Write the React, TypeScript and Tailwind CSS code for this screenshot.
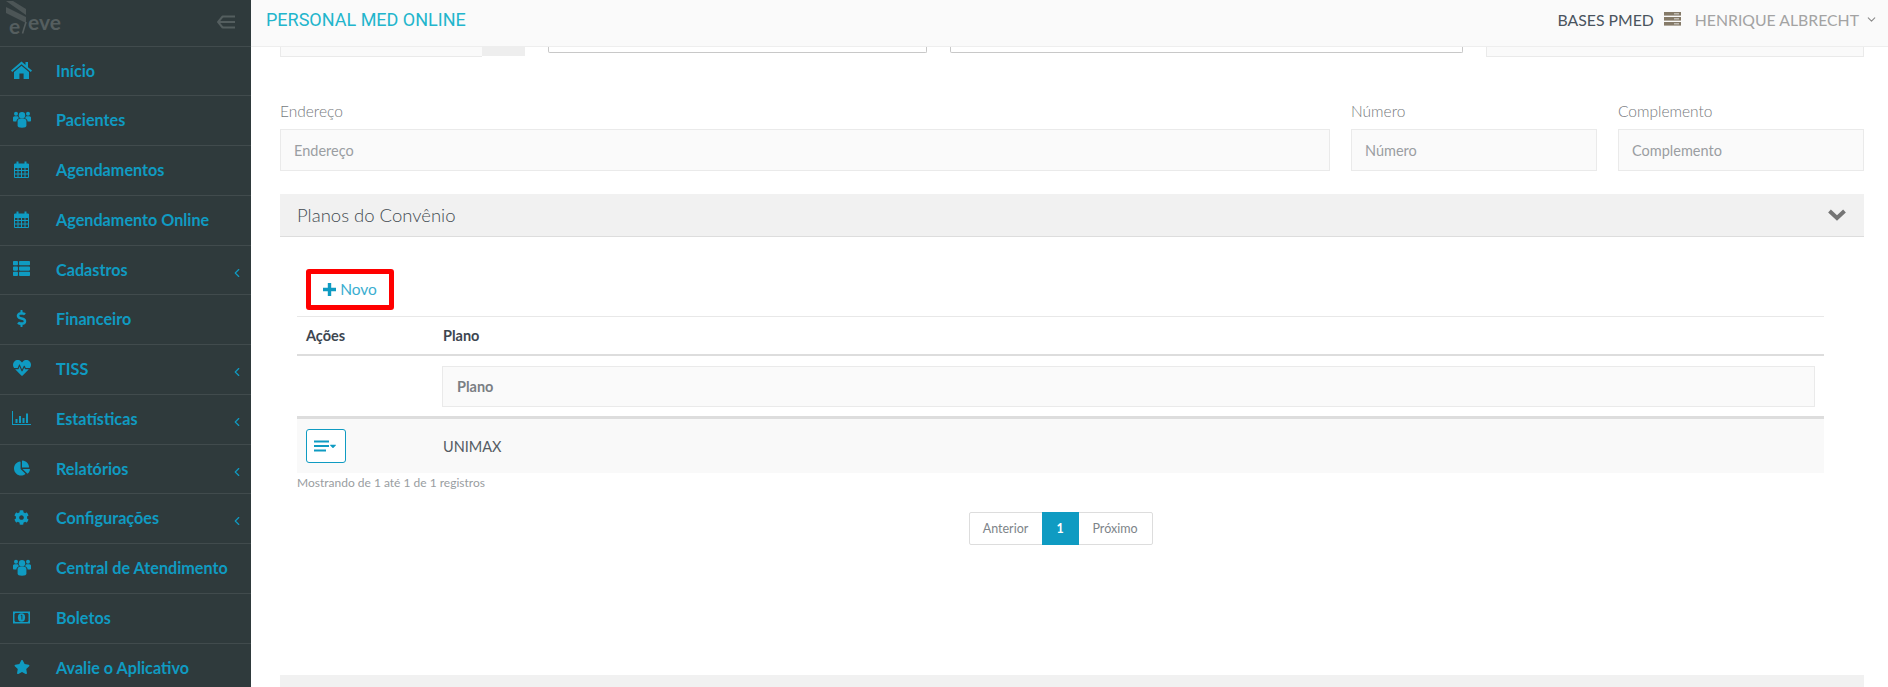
import {
  FaThList,
  FaDollarSign,
  FaHeartbeat,
  FaChartPie,
  FaCog,
  FaStar,
  FaCaretDown,
} from "react-icons/fa";
import { ChevronDown, ChevronLeft } from "lucide-react";
import type { ReactNode } from "react";

function HomeIcon() {
  return (
    <svg width="21" height="18" viewBox="0 0 21 18" fill="currentColor">
      <path d="M10.5 0.5 L14.5 4 V1 H17 V6.2 L21 9.6 L19.8 11 L10.5 3.2 L1.2 11 L0 9.6 Z" />
      <path d="M10.5 4.8 L18 11 V18 H12.6 V12.6 H8.4 V18 H3 V11 Z" />
    </svg>
  );
}

function UsersIcon() {
  return (
    <svg width="18" height="17" viewBox="0 0 18 17" fill="currentColor">
      <circle cx="9" cy="4.2" r="3.2" />
      <circle cx="3" cy="2.8" r="2" />
      <circle cx="15" cy="2.8" r="2" />
      <path d="M4.6 10 C4.6 8 6.5 7.6 9 7.6 C11.5 7.6 13.4 8 13.4 10 V14.6 C13.4 16.2 12 16.8 9 16.8 C6 16.8 4.6 16.2 4.6 14.6 Z" />
      <path d="M0 6.6 C0 5.4 1.2 5.2 3 5.2 C3.8 5.2 4.6 5.3 5.2 5.6 C5.4 6.6 5.8 7 6 7.3 C4.4 7.8 3.6 8.7 3.4 10.6 H1.2 C0.4 10.6 0 10.2 0 9.6 Z" />
      <path d="M18 6.6 C18 5.4 16.8 5.2 15 5.2 C14.2 5.2 13.4 5.3 12.8 5.6 C12.6 6.6 12.2 7 12 7.3 C13.6 7.8 14.4 8.7 14.6 10.6 H16.8 C17.6 10.6 18 10.2 18 9.6 Z" />
    </svg>
  );
}

function CalendarIcon() {
  return (
    <svg width="15" height="17" viewBox="0 0 15 17" fill="none" stroke="currentColor">
      <path d="M0.5 3 H14.5 V16.5 H0.5 Z" />
      <path d="M0.5 3.5 H14.5 V6.5 H0.5 Z" fill="currentColor" />
      <path d="M0.5 9.5 H14.5 M0.5 13 H14.5 M4 6.5 V16.5 M7.5 6.5 V16.5 M11 6.5 V16.5" />
      <path d="M3.5 0.5 V4 M11.5 0.5 V4" strokeWidth="2" />
    </svg>
  );
}

function BarsIcon() {
  return (
    <svg width="19" height="14" viewBox="0 0 19 14" fill="currentColor">
      <path d="M0 0 H1 V13 H19 V14 H0 Z" />
      <rect x="3.5" y="8" width="2" height="4" />
      <rect x="7" y="5" width="2" height="7" />
      <rect x="10.5" y="7" width="2" height="5" />
      <rect x="14" y="2.5" width="2" height="9.5" />
    </svg>
  );
}

function MoneyIcon() {
  return (
    <svg width="17" height="13" viewBox="0 0 17 13">
      <path d="M0 0.5 H17 V12.5 H0 Z" fill="currentColor" />
      <path d="M2.5 2 H14.5 L15.5 3 V10 L14.5 11 H2.5 L1.5 10 V3 Z" fill="#2f3a3c" />
      <ellipse cx="8.5" cy="6.5" rx="3.6" ry="4.2" fill="currentColor" />
      <path d="M7.8 4.6 L8.9 4.2 V8.6" stroke="#2f3a3c" strokeWidth="1" fill="none" />
    </svg>
  );
}

type MenuItem = { label: string; icon: ReactNode; sub?: boolean };

const menu: MenuItem[] = [
  { label: "Início", icon: <HomeIcon /> },
  { label: "Pacientes", icon: <UsersIcon /> },
  { label: "Agendamentos", icon: <CalendarIcon /> },
  { label: "Agendamento Online", icon: <CalendarIcon /> },
  { label: "Cadastros", icon: <FaThList size={17} />, sub: true },
  { label: "Financeiro", icon: <FaDollarSign size={17} /> },
  { label: "TISS", icon: <FaHeartbeat size={18} />, sub: true },
  { label: "Estatísticas", icon: <BarsIcon />, sub: true },
  { label: "Relatórios", icon: <FaChartPie size={16} />, sub: true },
  { label: "Configurações", icon: <FaCog size={15} />, sub: true },
  { label: "Central de Atendimento", icon: <UsersIcon /> },
  { label: "Boletos", icon: <MoneyIcon /> },
  { label: "Avalie o Aplicativo", icon: <FaStar size={16} /> },
];

function Logo() {
  return (
    <svg width="66" height="46" viewBox="0 0 66 46" fill="none">
      <path d="M6 1 L13 1 L26 9 V15 Z" fill="#4c5556" />
      <path d="M6 7 L26 17 V23 L6 13 Z" fill="#4c5556" />
      <text x="9" y="33.5" fontFamily="Lato, sans-serif" fontSize="21" fontWeight="700" fill="#555e5f">
        e
      </text>
      <path d="M22.5 33.5 L26 22" stroke="#555e5f" strokeWidth="1.6" />
      <text x="28" y="30" fontFamily="Lato, sans-serif" fontSize="21" fontWeight="700" fill="#555e5f">
        eve
      </text>
    </svg>
  );
}

function Sidebar() {
  return (
    <aside className="w-[251px] shrink-0 h-full bg-[#2f3a3c] overflow-hidden font-['Lato',sans-serif]">
      <div className="h-[46.5px] flex items-center justify-between pr-4 border-b border-[#414b4d]">
        <Logo />
        <svg width="18" height="14" viewBox="0 0 18 14" className="mb-[1px]" fill="none" stroke="#545e5f" strokeWidth="2">
          <path d="M6 1 L1 7 L6 13" />
          <path d="M2 7 H18" />
          <path d="M6 1.5 H18" />
          <path d="M6 12.5 H18" />
        </svg>
      </div>
      {menu.map((item) => (
        <div
          key={item.label}
          className="h-[49.75px] flex items-center border-b border-[#414b4d] text-[#0f9bc2] relative"
        >
          <span className="w-[43px] mr-[13px] flex justify-center shrink-0 mb-[2px]">{item.icon}</span>
          <span className="text-[16.2px] font-bold">{item.label}</span>
          {item.sub && <ChevronLeft size={14} className="absolute right-[7px] top-[20px]" />}
        </div>
      ))}
    </aside>
  );
}

function ServerIcon() {
  return (
    <svg width="17" height="14" viewBox="0 0 17 14" fill="#857a68">
      <rect x="0" y="0" width="17" height="3.6" />
      <rect x="0" y="5" width="17" height="3.6" />
      <rect x="0" y="10" width="17" height="3.6" />
      <path d="M10 1.4 H15 V2.2 H10 Z M10 6.4 H15 V7.2 H10 Z M10 11.4 H15 V12.2 H10 Z" fill="#fafafa" />
    </svg>
  );
}

function Header() {
  return (
    <header className="h-[47px] shrink-0 bg-[#fafafa] border-b border-[#eeeeee] flex items-center justify-between pl-[15px] pr-[10px] pb-[7px]">
      <span className="text-[#22b5cc] text-[18px] font-['Roboto',sans-serif]">PERSONAL MED ONLINE</span>
      <div className="flex items-center font-['Lato',sans-serif] text-[15.8px]">
        <span className="text-[#4a545e]">BASES PMED</span>
        <span className="ml-[10px] mb-[2px] flex">
          <ServerIcon />
        </span>
        <span className="text-[#a3a3a3] ml-[14px]">HENRIQUE ALBRECHT</span>
        <ChevronDown size={13} className="text-[#8b8b8b] ml-[6px]" />
      </div>
    </header>
  );
}

function Field({ label, className }: { label: string; className: string }) {
  return (
    <div className={className}>
      <label className="block text-[#75797d] text-[15.5px] font-light leading-[20px] pt-px -mb-px mb-[8px]">{label}</label>
      <div className="h-[42px] bg-[#fafafa] border border-[#eaeaea] flex items-center px-[13px] pt-px text-[14.5px] text-[#9a9ea2]">
        {label}
      </div>
    </div>
  );
}

function Planos() {
  return (
    <div className="pl-[17px]">
      <div className="w-[88px] h-[41px] ml-[9px] mt-[32px] border-[5px] border-[#ff0000] rounded-[3px] flex items-center justify-center gap-[4px] text-[#3aaed0] text-[15.5px] pt-px">
        <svg width="13" height="13" viewBox="0 0 13 13" fill="#0f9bc2" className="-mt-px">
          <path d="M4.8 0 H8.2 V4.8 H13 V8.2 H8.2 V13 H4.8 V8.2 H0 V4.8 H4.8 Z" />
        </svg>
        <span>Novo</span>
      </div>
      <div className="w-[1527px] mt-[6px] border-t border-[#e8e8e8]">
        <div className="h-[39px] flex items-center pt-px border-b-2 border-[#dddddd] text-[14.5px] font-bold text-[#3d4650]">
          <span className="w-[146px] pl-[9px]">Ações</span>
          <span>Plano</span>
        </div>
        <div className="h-[63px] border-b-[3px] border-[#dddddd] pl-[145px] pr-[9px] pt-[10px]">
          <div className="h-[41px] bg-[#fafafa] border border-[#eaeaea] flex items-center pl-[14px] text-[14.5px] font-bold text-[#7a7f84]">
            Plano
          </div>
        </div>
        <div className="h-[54px] bg-[#f9f9f9] flex items-center text-[14.5px] text-[#555c63]">
          <span className="w-[146px] pl-[9px]">
            <span className="w-[40px] h-[34px] border border-[#0f9bc2] rounded-[3px] bg-white flex items-center justify-center text-[#0f9bc2]">
              <svg width="15" height="12" viewBox="0 0 15 12" fill="currentColor">
                <rect x="0" y="0.5" width="15" height="2" />
                <rect x="0" y="5" width="15" height="2" />
                <rect x="0" y="9.5" width="12" height="2" />
              </svg>
              <FaCaretDown size={10} className="ml-[-1px]" />
            </span>
          </span>
          <span className="pt-[2px]">UNIMAX</span>
        </div>
      </div>
      <div className="text-[12px] text-[#999da1] leading-[18px] pt-px h-[18px]">Mostrando de 1 até 1 de 1 registros</div>
      <div className="w-[1527px] flex justify-center mt-[21px]">
        <div className="flex h-[33px] border border-[#dddddd] rounded-[2px] text-[12.5px] text-[#7d8489]">
          <span className="w-[72px] flex items-center justify-center pt-px">Anterior</span>
          <span className="w-[37px] bg-[#0f9bc2] text-white font-bold flex items-center justify-center -my-px pt-px">1</span>
          <span className="w-[73px] flex items-center justify-center pt-px">Próximo</span>
        </div>
      </div>
    </div>
  );
}

export default function App() {
  return (
    <div className="w-[1888px] h-[687px] flex overflow-hidden bg-white font-['Lato',sans-serif]">
      <Sidebar />
      <main className="flex-1 flex flex-col min-w-0 overflow-hidden">
        <Header />
        <div className="pl-[29px] pr-[24px] flex-1 flex flex-col overflow-hidden">
          {/* pedaço dos campos cortados pela rolagem */}
          <div className="flex h-[11px] shrink-0 items-start">
            <div className="w-[202px] h-[10px] bg-[#fafafa] border-b border-l border-[#eaeaea]" />
            <div className="w-[43px] h-[9px] bg-[#eeeeee] mr-[23px]" />
            <div className="w-[380px] h-[6px] border border-t-0 border-[#c8c8c8] rounded-b-[2px] mr-[23px]" />
            <div className="w-[513px] h-[6px] border border-t-0 border-[#c8c8c8] rounded-b-[2px] mr-[23px]" />
            <div className="w-[379px] h-[10px] bg-[#fafafa] border-b border-x border-[#eaeaea]" />
          </div>
          <div className="flex gap-[21px] mt-[42px] shrink-0">
            <Field label="Endereço" className="w-[1050px]" />
            <Field label="Número" className="w-[246px]" />
            <Field label="Complemento" className="w-[246px]" />
          </div>
          <div className="h-[43px] mt-[23px] shrink-0 bg-[#f1f1f1] border-b border-[#dddddd] flex items-center justify-between pl-[17px] pr-[18px] text-[18.5px] text-[#444c52] font-light">
            <span className="pt-px">Planos do Convênio</span>
            <svg width="18" height="12" viewBox="0 0 18 12" fill="none" stroke="#757575" strokeWidth="4">
              <path d="M1.5 2 L9 9 L16.5 2" />
            </svg>
          </div>
          <Planos />
          <div className="mt-auto h-[12px] shrink-0 bg-[#f1f1f1]" />
        </div>
      </main>
    </div>
  );
}
